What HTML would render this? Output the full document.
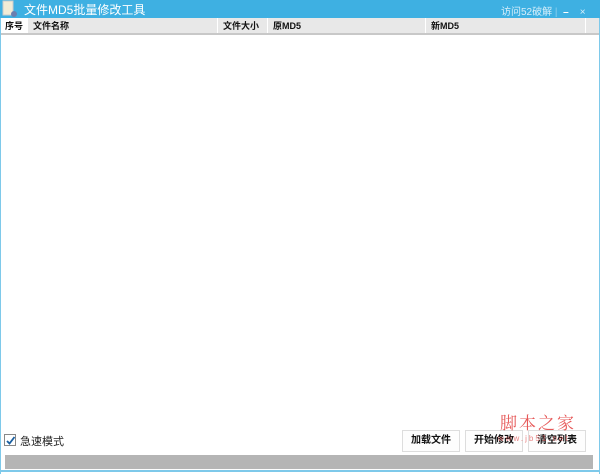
<!DOCTYPE html>
<html><head><meta charset="utf-8"><style>
*{margin:0;padding:0;box-sizing:border-box}
body{width:600px;height:474px;background:#fff;font-family:"Liberation Sans","Noto Sans CJK SC",sans-serif;position:relative;overflow:hidden}
.title{position:absolute;left:0;top:0;width:600px;height:18px;background:#3eb0e2;color:#fff;font-size:12px}
.title .t{position:absolute;left:24px;top:1px}
.title .r{position:absolute;left:501px;top:3px;font-size:10px;color:#d6eefa}
.hdr{position:absolute;left:0;top:18px;width:600px;height:17px;background:#e8e8e8;border-bottom:2px solid #c8c8c8;font-size:9px;font-weight:bold;color:#111}
.hdr div{position:absolute;top:0;height:15px;line-height:16px;padding-left:5px;border-right:1px solid #fff}
.btn{position:absolute;top:430px;height:22px;width:58px;border:1px solid #ddd;background:#fdfdfd;font-size:10px;font-weight:bold;text-align:center;line-height:20px;color:#111}
</style></head><body>
<div class="title">
<svg style="position:absolute;left:2px;top:0" width="16" height="18"><rect x="1" y="1" width="10" height="14" fill="#f2ecd6" stroke="#ccc"/><circle cx="12" cy="14" r="3" fill="#6a7fb0"/></svg>
<span class="t">文件MD5批量修改工具</span>
<span class="r">访问52破解 <span style="opacity:.5">|</span> &nbsp;<b style="color:#fff">–</b> &nbsp;&nbsp; ×</span>
</div>
<div class="hdr">
<div style="left:0;width:28px;background:#fff">序号</div>
<div style="left:28px;width:190px">文件名称</div>
<div style="left:218px;width:50px">文件大小</div>
<div style="left:268px;width:158px">原MD5</div>
<div style="left:426px;width:160px">新MD5</div>
</div>
<div style="position:absolute;left:0;top:18px;width:1px;height:456px;background:#7ec9ea"></div>
<div style="position:absolute;right:0;top:18px;width:1px;height:456px;background:#7ec9ea"></div>
<div style="position:absolute;left:4px;top:434px;width:12px;height:12px;border:1px solid #888;background:#fff"></div>
<svg style="position:absolute;left:5px;top:435px" width="11" height="11"><path d="M2 6 L4.5 8.5 L9.5 2" stroke="#1a5fa0" stroke-width="1.8" fill="none"/></svg>
<div style="position:absolute;left:20px;top:433px;font-size:11px;color:#222">急速模式</div>
<div class="btn" style="left:402px">加载文件</div>
<div class="btn" style="left:465px">开始修改</div>
<div class="btn" style="left:528px">清空列表</div>
<div style="position:absolute;left:500px;top:409px;color:#e23c3c;font-size:17px;letter-spacing:2px;font-family:'Noto Serif CJK SC',serif;opacity:.85">脚本之家</div>
<div style="position:absolute;left:498px;top:434px;color:#e05050;font-size:8px;letter-spacing:2px;opacity:.7">www.jb51.net</div>
<div style="position:absolute;left:5px;top:455px;width:588px;height:14px;background:#b5b5b5"></div>
<div style="position:absolute;left:0;top:470px;width:600px;height:2px;background:#7ec9ea"></div>
</body></html>
